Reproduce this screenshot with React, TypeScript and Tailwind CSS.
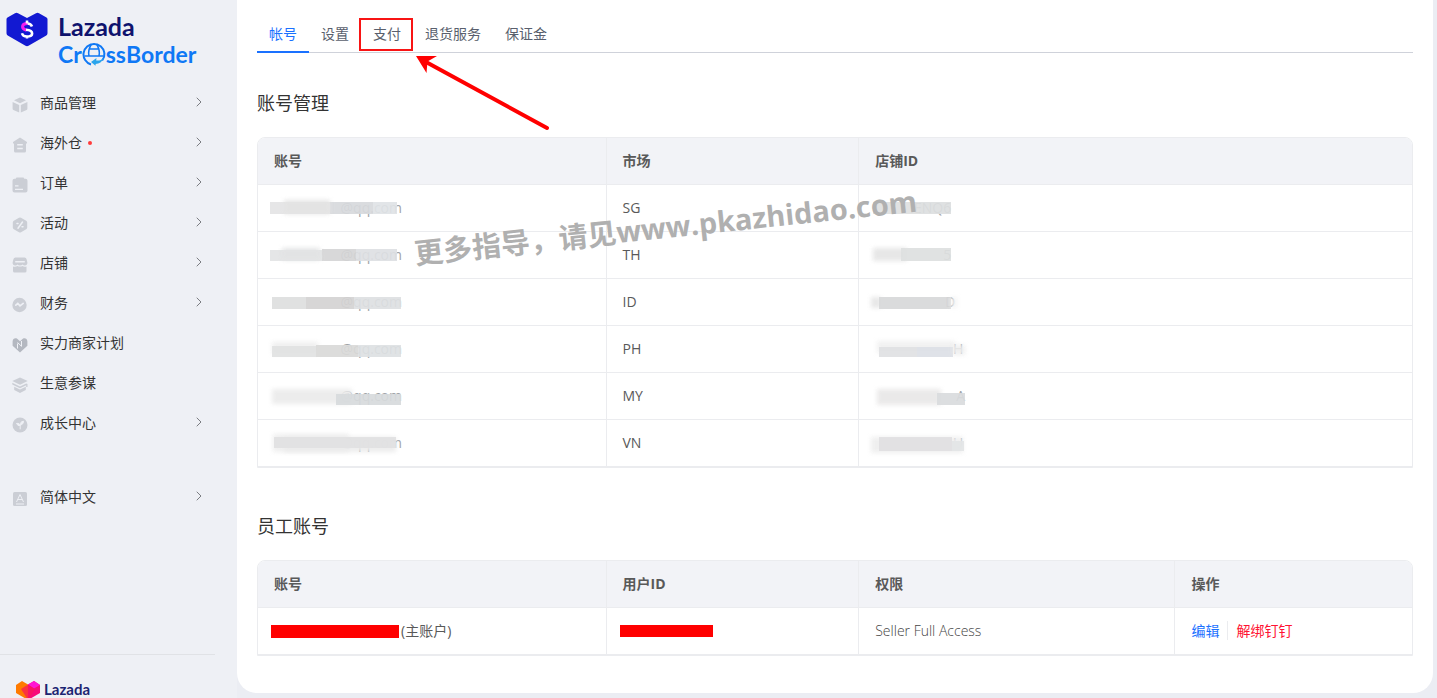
import clsx from "clsx";
import { ChevronRight } from "lucide-react";
import React, { useState } from "react";

interface MenuItem {
  label: string;
  icon: React.ReactNode;
  arrow?: boolean;
  dot?: boolean;
}

interface Patch {
  x: number;
  y: number;
  w: number;
  h: number;
  fill: string;
  soft?: boolean;
}

interface SmudgeData {
  text: string;
  width: number;
  patches: Patch[];
}

const menu: MenuItem[] = [
  {
    label: "商品管理",
    arrow: true,
    icon: (
      <>
        <path d="M8 .5 14 3.2 8 6.2 2 3.2z" />
        <path d="M.6 5 7.2 8v7.6L1.4 13a1.4 1.4 0 0 1-.8-1.3z" />
        <path d="M15.4 5 8.8 8v7.6l5.8-2.6a1.4 1.4 0 0 0 .8-1.3z" />
      </>
    ),
  },
  {
    label: "海外仓",
    arrow: true,
    dot: true,
    icon: (
      <path
        fillRule="evenodd"
        d="M8 .5 15 5v1.5h-1V14a1.5 1.5 0 0 1-1.5 1.5h-9A1.5 1.5 0 0 1 2 14V6.5H1V5zM5.2 7v1.4h5.6V7zm0 3.8v1.4h5.6v-1.4z"
      />
    ),
  },
  {
    label: "订单",
    arrow: true,
    icon: (
      <path
        fillRule="evenodd"
        d="M4.5.5h7l.8 1.2h1.2a2 2 0 0 1 2 2V13.5a2 2 0 0 1-2 2h-11a2 2 0 0 1-2-2V3.7a2 2 0 0 1 2-2h1.2zM3 8.3v1.2h3.5V8.3zm0 3.4v1.2h8v-1.2z"
      />
    ),
  },
  {
    label: "活动",
    arrow: true,
    icon: (
      <>
        <path d="M7 .8a2 2 0 0 1 2 0l5.2 2.9a2 2 0 0 1 1 1.7v5.2a2 2 0 0 1-1 1.7L9 15.2a2 2 0 0 1-2 0l-5.2-2.900a2 2 0 0 1-1-1.7V5.4a2 2 0 0 1 1-1.7z" />
        <path
          d="m6 11.200 4.500-6.200M5 6.500h1M10 9.800h1"
          fill="none"
          stroke="#eef0f5"
          strokeWidth="1.5"
          strokeLinecap="round"
        />
      </>
    ),
  },
  {
    label: "店铺",
    arrow: true,
    icon: (
      <>
        <path
          fillRule="evenodd"
          d="M3.5.5h9a2 2 0 0 1 2 1.5l.9 3.5c.2 2-1.2 3-2.5 3-1 0-1.800-.4-2.400-1-.6.6-1.500 1-2.500 1s-1.900-.4-2.500-1c-.6.6-1.400 1-2.400 1C1.800 8.500.4 7.500.6 5.500L1.500 2a2 2 0 0 1 2-1.500zM3.200 4v1.400h9.600V4z"
        />
        <path d="M1 9.500c2 .5 3 .2 4.500-.5 1.500.8 3.500.8 5 0 1 .7 2 1 4 .5v4.500a1.500 1.500 0 0 1-1.500 1.500H2.500A1.500 1.500 0 0 1 1 14z" />
      </>
    ),
  },
  {
    label: "财务",
    arrow: true,
    icon: (
      <>
        <circle cx="7.5" cy="8" r="7.200" />
        <path
          d="m3.800 8.200 2-1.700 2.200 2.400 3.200-2.500"
          fill="none"
          stroke="#eef0f5"
          strokeWidth="1.700"
          strokeLinecap="round"
        />
      </>
    ),
  },
  {
    label: "实力商家计划",
    icon: (
      <g fill="#b4b8c0">
        <path d="M.6 4.600C.6 1.800 3.200.6 5.200 1.800L8 4.200l2.800-2.400c2-1.200 4.600 0 4.600 2.800v4.200L8 15.500.6 8.800z" />
        <path
          d="M5.500 11.500V6.500M5.500 5.500l4 3.800V4"
          fill="none"
          stroke="#eef0f5"
          strokeWidth="1"
        />
      </g>
    ),
  },
  {
    label: "生意参谋",
    icon: (
      <>
        <path d="M8 .5 15.700 4 8 7.800.3 4z" />
        <path d="M.3 5.800 8 9.500l6.200-3 1.300.4V10h-1.300V8.300L8 11.200.3 7.500z" />
        <path d="M2.200 9.800 8 12.500l5.800-2.700v3.200L8 15.900 2.200 13z" />
      </>
    ),
  },
  {
    label: "成长中心",
    arrow: true,
    icon: (
      <>
        <circle cx="8" cy="8" r="7.500" />
        <path
          d="M8.200 12.300V8M8.200 8.500C6.500 8.800 5.200 8 4.500 6.500c1.600-.4 3 .1 3.700 2zM8.200 8c-.2-2 1-3.600 3.300-3.800.1 2.200-1.200 3.500-3.300 3.800z"
          fill="#eef0f5"
          stroke="#eef0f5"
        />
      </>
    ),
  },
];

const language: MenuItem = {
  label: "简体中文",
  arrow: true,
  icon: (
    <>
      <rect x="1" y="1" width="14" height="14" rx="1.5" />
      <path
        d="M4.500 11 8 3.500 11.500 11M5.700 8.500h4.600M4 13h8"
        fill="none"
        stroke="#eef0f5"
        strokeWidth="1"
      />
    </>
  ),
};

const tabs = ["帐号", "设置", "支付", "退货服务", "保证金"];

const mail = (patches: Patch[]): SmudgeData => ({
  text: "@qq.com",
  width: 132,
  patches,
});

const shop = (text: string, width: number, patches: Patch[]): SmudgeData => ({
  text,
  width,
  patches,
});

const accounts: { market: string; account: SmudgeData; shopId: SmudgeData }[] = [
  {
    market: "SG",
    account: mail([
      { x: 0, y: 4, w: 60, h: 12, fill: "#e4e4e5" },
      { x: 60, y: 4, w: 43, h: 12, fill: "#d7d9dc" },
      { x: 103, y: 4, w: 24, h: 12, fill: "#dfe3e6" },
      { x: 14, y: 2, w: 46, h: 14, fill: "#e3e3e3", soft: true },
    ]),
    shopId: shop("ENQ6", 80, [
      { x: 2, y: 4, w: 46, h: 12, fill: "#dedfe0" },
      { x: 48, y: 4, w: 32, h: 12, fill: "#dcdee0" },
    ]),
  },
  {
    market: "TH",
    account: mail([
      { x: 0, y: 5, w: 52, h: 11, fill: "#e3e4e5" },
      { x: 52, y: 4, w: 34, h: 12, fill: "#d5d5d6" },
      { x: 86, y: 4, w: 41, h: 12, fill: "#dde0e3" },
      { x: 12, y: 3, w: 38, h: 12, fill: "#e2e3e4", soft: true },
    ]),
    shopId: shop("5", 80, [
      { x: 2, y: 3, w: 34, h: 13, fill: "#e5e5e5", soft: true },
      { x: 30, y: 3, w: 50, h: 13, fill: "#dddfe0" },
    ]),
  },
  {
    market: "ID",
    account: mail([
      { x: 2, y: 5, w: 34, h: 12, fill: "#dddede" },
      { x: 36, y: 5, w: 48, h: 12, fill: "#d4d3d2" },
      { x: 84, y: 5, w: 47, h: 12, fill: "#dde0e2" },
    ]),
    shopId: shop("D", 84, [
      { x: 0, y: 5, w: 10, h: 11, fill: "#e6e6e6", soft: true },
      { x: 8, y: 5, w: 72, h: 12, fill: "#d7d8d9" },
      { x: 80, y: 5, w: 6, h: 11, fill: "#f3f3f3", soft: true },
    ]),
  },
  {
    market: "PH",
    account: mail([
      { x: 2, y: 3, w: 46, h: 12, fill: "#eeeeee", soft: true },
      { x: 2, y: 7, w: 44, h: 11, fill: "#e1e2e2" },
      { x: 46, y: 6, w: 42, h: 12, fill: "#d9d9d8" },
      { x: 88, y: 6, w: 43, h: 12, fill: "#dde1e3" },
    ]),
    shopId: shop("H", 92, [
      { x: 6, y: 2, w: 78, h: 12, fill: "#f0f0f0", soft: true },
      { x: 8, y: 8, w: 38, h: 10, fill: "#dfe1e3" },
      { x: 46, y: 8, w: 36, h: 10, fill: "#dce0e6" },
      { x: 82, y: 6, w: 12, h: 10, fill: "#eeeeee", soft: true },
    ]),
  },
  {
    market: "MY",
    account: mail([
      { x: 2, y: 3, w: 80, h: 15, fill: "#ebebeb", soft: true },
      { x: 66, y: 8, w: 65, h: 11, fill: "#d7dadc" },
    ]),
    shopId: shop("A", 94, [
      { x: 6, y: 3, w: 64, h: 16, fill: "#e9e8e8", soft: true },
      { x: 66, y: 7, w: 28, h: 12, fill: "#d9dbdd" },
    ]),
  },
  {
    market: "VN",
    account: mail([
      { x: 3, y: 1, w: 76, h: 18, fill: "#eeeeee", soft: true },
      { x: 14, y: 4, w: 112, h: 15, fill: "#ebebeb", soft: true },
      { x: 4, y: 4, w: 122, h: 11, fill: "#e1e1e2" },
    ]),
    shopId: shop("U", 92, [
      { x: 0, y: 4, w: 92, h: 16, fill: "#eeeeee", soft: true },
      { x: 8, y: 4, w: 73, h: 14, fill: "#e1e0e2" },
      { x: 81, y: 8, w: 12, h: 10, fill: "#e3e5e6" },
    ]),
  },
];

const Smudge = ({ text, width, patches }: SmudgeData) => (
  <span
    className="relative -ml-1 block h-5 text-right text-[#a0a3a7]"
    style={{ width }}
  >
    {text}
    <svg className="absolute inset-0 h-5 w-full overflow-visible">
      {patches.map((p, i) => (
        <rect
          key={i}
          x={p.x}
          y={p.y}
          width={p.w}
          height={p.h}
          fill={p.fill}
          opacity=".92"
          className={clsx(p.soft && "blur-[2px]")}
        />
      ))}
    </svg>
  </span>
);

const MenuRow = ({ label, icon, arrow, dot }: MenuItem) => (
  <a href="#" className="flex h-10 items-center pr-[30px] pl-3">
    <svg
      viewBox="0 0 16 16"
      className="mt-1 mr-3 h-4 w-4 shrink-0"
      fill="#cbced5"
    >
      {icon}
    </svg>
    {label}
    {dot && <span className="ml-1.5 h-1 w-1 rounded-full bg-[#ff3b3b]" />}
    {arrow && (
      <ChevronRight
        className="mb-0.5 ml-auto h-4 w-4 text-[#7b7d82]"
        strokeWidth={1.5}
      />
    )}
  </a>
);

const Globe = () => (
  <svg viewBox="0 0 24 24" className="h-6 w-6" fill="none" stroke="#0f78f5">
    <path d="M9 22.500A10.500 10.500 0 1 1 22.400 11" strokeWidth="2" />
    <path d="M22.400 11c.3 3-.7 5.500-2.200 7.500" strokeWidth="2" />
    <path
      d="M2.500 14h19M9.500 2c-2.500 4-3.500 8-2.500 12M14.500 2c2.500 4 3.500 8 2.500 12M6.500 7h11"
      strokeWidth="1.500"
    />
    <path
      d="m9 20 5.500-4-.3 2.500c3 .3 5.500-.5 7.500-2.500-1.500 4-4.500 5.800-8 6l-.2 1.800z"
      fill="#2ba5ec"
      stroke="none"
    />
  </svg>
);

const Logo = () => (
  <a href="#" className="flex h-[72px] pt-3 pl-1.5">
    <svg viewBox="0 0 42 35" className="h-[35px] w-[42px] shrink-0">
      <path
        d="M9 1.200q1.500-.8 3 0l9 4.800 9-4.800q1.500-.8 3 0l7.500 4.200q1 .6 1 1.800v14q0 1.400-1.200 2.200L22.500 33.800q-1.500.8-3 0L1.700 23.400Q.5 22.600.500 21.200v-14q0-1.200 1-1.800z"
        fill="#1219d2"
      />
      <path
        d="M26 14.500c-.8-2.300-2.300-3-4.800-3"
        fill="none"
        stroke="#fff"
        strokeWidth="2.600"
      />
      <path
        d="M21.500 11.500c-6-.2-6.800 5.500-1 6.700"
        fill="none"
        stroke="#f41cf0"
        strokeWidth="3"
      />
      <path
        d="M20 17.800c8.500.8 7.500 6.700 1 6.700-2.700 0-4.500-1-5-3.200M21 8.500v3M21 24v2.500"
        fill="none"
        stroke="#fff"
        strokeWidth="2.600"
      />
    </svg>
    <span className="ml-2.5 flex flex-col font-[Lato,sans-serif]">
      <span className="text-[25px] leading-7 font-bold text-[#0f136d]">
        Lazada
      </span>
      <span className="flex h-7 items-center text-[23px] font-bold text-[#0f78f5]">
        Cr
        <Globe />
        ss<span>Border</span>
      </span>
    </span>
  </a>
);

const Th = ({ children }: { children: React.ReactNode }) => (
  <th className="h-[47px] border-r border-b border-[#ebecef] bg-[#f2f3f7] px-4 text-left font-bold last:border-r-0">
    {children}
  </th>
);

const Td = ({ children }: { children: React.ReactNode }) => (
  <td className="h-[47px] border-r border-b border-[#ebecef] px-4 last:border-r-0">
    {children}
  </td>
);

const tableClass =
  "w-full table-fixed border-separate border-spacing-0 overflow-hidden rounded-t-lg border border-[#ebecef]";

export default function App() {
  const [active, setActive] = useState("帐号");

  return (
    <div className="flex min-h-screen bg-[#ebedf3] font-['Open_Sans','Noto_Sans_CJK_SC',sans-serif] text-sm text-[#333]">
      <aside className="flex h-screen w-[237px] shrink-0 flex-col overflow-hidden bg-[#eef0f5]">
        <Logo />
        <nav className="mt-[11px]">
          {menu.map((item) => (
            <MenuRow key={item.label} {...item} />
          ))}
          <div className="mt-[34px]">
            <MenuRow {...language} />
          </div>
        </nav>
        <div className="mt-auto mr-[22px] h-11 shrink-0 border-t border-[#e0e2e6] pt-6 pl-4">
          <a href="#" className="flex items-center gap-1">
            <svg viewBox="0 0 24 20" className="h-5 w-6">
              <path d="M0 5 6 1l6 3.500V20L0 13z" fill="#ff7a00" />
              <path d="M24 5 18 1l-6 3.500V20l12-7z" fill="#f80b78" />
              <path d="m12 4.500 6-3.500 6 4-6 3.500z" fill="#ff14d4" />
              <path d="m5 9 7-4.500L19 9l-7 11z" fill="#f8175b" opacity=".7" />
            </svg>
            <span className="font-[Lato,sans-serif] text-[15px] font-bold text-[#1c2472]">
              Lazada
            </span>
          </a>
        </div>
      </aside>

      <main className="relative mr-1 mb-[5px] min-w-0 flex-1 rounded-b-[20px] bg-white px-5 pt-4 pb-9">
        <div role="tablist" className="flex border-b border-[#cfd2da]">
          {tabs.map((tab) => (
            <button
              key={tab}
              role="tab"
              aria-selected={active === tab}
              onClick={() => setActive(tab)}
              className={clsx(
                "relative -mb-px h-[37px] border-b-2 px-3",
                active === tab
                  ? "border-[#1a71ff] text-[#1a71ff]"
                  : "border-transparent text-[#595f6d]"
              )}
            >
              {tab}
              {tab === "支付" && (
                <span className="absolute top-0.5 right-0 bottom-0 -left-0.5 border-2 border-[#f81414]" />
              )}
            </button>
          ))}
        </div>

        <h2 className="mt-9 text-lg leading-7">账号管理</h2>
        <table className={clsx(tableClass, "mt-5 text-[#595959]")}>
          <colgroup>
            <col className="w-[30.2%]" />
            <col className="w-[21.9%]" />
            <col />
          </colgroup>
          <thead>
            <tr>
              <Th>账号</Th>
              <Th>市场</Th>
              <Th>店铺ID</Th>
            </tr>
          </thead>
          <tbody>
            {accounts.map(({ market, account, shopId }) => (
              <tr key={market}>
                <Td>
                  <Smudge {...account} />
                </Td>
                <Td>{market}</Td>
                <Td>
                  <Smudge {...shopId} />
                </Td>
              </tr>
            ))}
          </tbody>
        </table>

        <h2 className="mt-11 text-lg leading-7">员工账号</h2>
        <table className={clsx(tableClass, "mt-5 text-[#595959]")}>
          <colgroup>
            <col className="w-[30.2%]" />
            <col className="w-[21.9%]" />
            <col className="w-[27.4%]" />
            <col />
          </colgroup>
          <thead>
            <tr>
              <Th>账号</Th>
              <Th>用户ID</Th>
              <Th>权限</Th>
              <Th>操作</Th>
            </tr>
          </thead>
          <tbody>
            <tr>
              <Td>
                <span className="flex items-center">
                  <span className="-ml-[3px] h-[13px] w-32 bg-[#ff0000]" />
                  <span className="ml-0.5">(主账户)</span>
                </span>
              </Td>
              <Td>
                <span className="-ml-[3px] block h-3 w-[93px] bg-[#ff0000]" />
              </Td>
              <Td>
                <span className="font-light text-[#444]">
                  Seller Full Access
                </span>
              </Td>
              <Td>
                <a href="#" className="text-[#1a71ff]">
                  编辑
                </a>
                <a
                  href="#"
                  className="ml-2 border-l border-[#ebecef] pl-2 text-[#ff1433]"
                >
                  解绑钉钉
                </a>
              </Td>
            </tr>
          </tbody>
        </table>

        <svg
          viewBox="0 0 134 76"
          className="absolute top-[55px] left-[179px] h-[76px] w-[134px]"
        >
          <path
            d="M10 7 131 73"
            stroke="#ff0000"
            strokeWidth="4"
            strokeLinecap="round"
          />
          <path d="M0 1h21l-9.500 5.500L10.500 18z" fill="#ff0000" />
        </svg>
        <div className="pointer-events-none absolute top-[207px] left-[176px] -rotate-6 text-[29px] leading-10 font-bold whitespace-nowrap text-[#b0b0b0]">
          更多指导，请见www.pkazhidao.com
        </div>
      </main>
    </div>
  );
}
